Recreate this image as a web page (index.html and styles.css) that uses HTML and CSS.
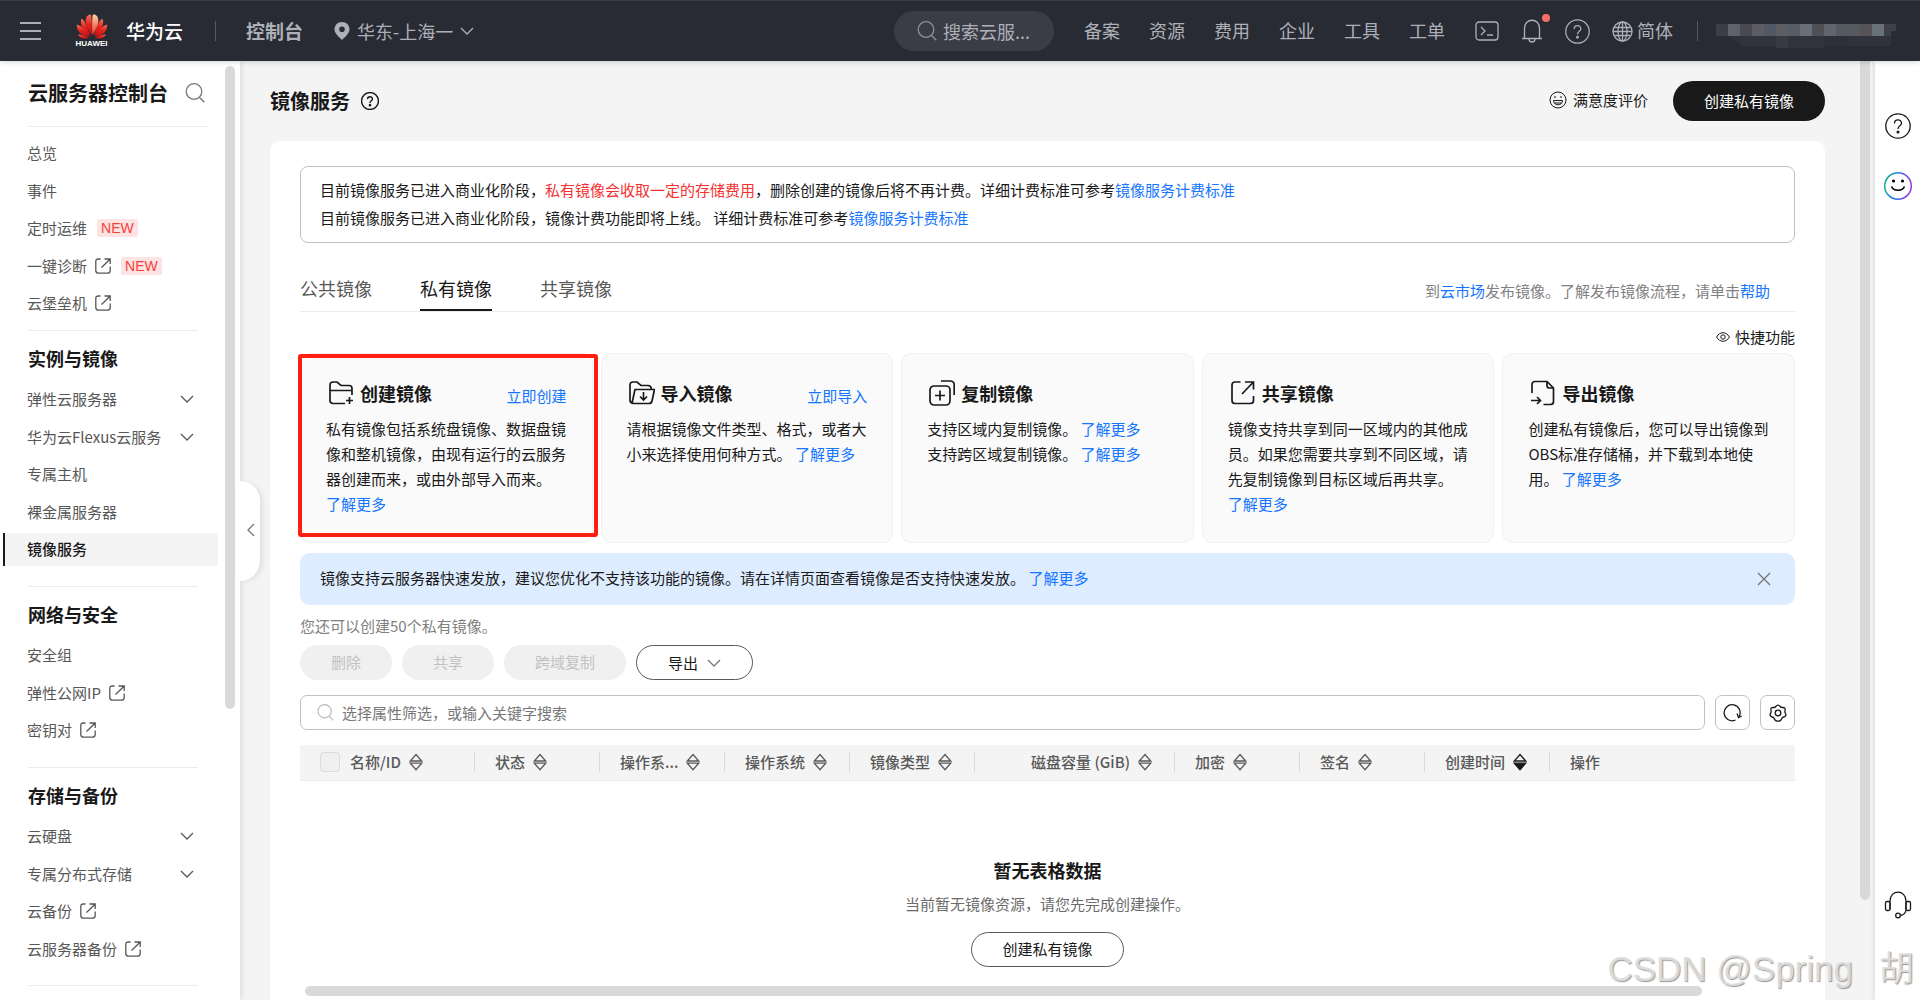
FILE: index.html
```html
<!DOCTYPE html>
<html lang="zh-CN">
<head>
<meta charset="utf-8">
<meta name="viewport" content="width=device-width, initial-scale=1">
<title>镜像服务 - 控制台</title>
<link rel="stylesheet" href="styles.css">
</head>
<body>
<svg class="sprite" aria-hidden="true">
  <defs>
    <symbol id="i-search" viewBox="0 0 20 20"><circle cx="9" cy="8.500" r="7.800"/><path d="M14.500 14.500L19.300 19.300"/></symbol>
    <symbol id="i-down" viewBox="0 0 14 14"><path d="M1 4l6 6 6-6"/></symbol>
    <symbol id="i-out" viewBox="0 0 16 16"><path d="M5.500 1H3.500Q.8 1 .8 3.500V12.500Q.8 15.200 3.500 15.200H12.500Q15.200 15.200 15.200 12.500V8.500M9.500 1H15.200V6M15 1.200L6.500 9.500"/></symbol>
    <symbol id="i-help" viewBox="0 0 26 26"><circle cx="13" cy="13" r="12.200"/><path d="M9.500 10.500C9.500 5.800 16.500 5.800 16.500 10.200C16.500 12.800 13 12.800 13 16"/><circle cx="13" cy="19" r=".9"/></symbol>
    <symbol id="i-sort" viewBox="0 0 14 18"><path d="M7 1.500L12.700 8H1.300Z"/><path d="M1.300 10.200H12.700L7 16.700Z"/></symbol>
  </defs>
</svg>

<header class="topbar">
  <button class="plain menu-btn" aria-label="菜单"><svg class="icon thick" width="22" height="20" viewBox="0 0 22 20"><path d="M0 2H21M0 10H21M0 18H21"/></svg></button>
  <a class="brand" href="#">
    <span class="brand-mark">
      <svg width="32" height="25" viewBox="0 0 32 25">
        <defs>
          <linearGradient id="petal" x1="0" y1="0" x2="0" y2="1"><stop offset="0" stop-color="#f2705a"/><stop offset=".5" stop-color="#e2231a"/><stop offset="1" stop-color="#c8101c"/></linearGradient>
          <linearGradient id="petal-light" x1="0" y1="0" x2="0" y2="1"><stop offset="0" stop-color="#fbd3a8"/><stop offset="1" stop-color="#e23a24"/></linearGradient>
        </defs>
        <g id="half" fill="url(#petal)">
          <path d="M15.500 21C10.500 13.500 8.500 7 10.500 3C12 .5 15 -.5 15.300 2C16 8 16 15 15.500 21Z"/>
          <path d="M14.300 22C7.500 18 3.500 11 5.300 5C8.500 4.500 11.500 13 14.300 22Z"/>
          <path d="M13.300 22.500C5 22 .5 17 .8 10.500C4.500 11 9.500 16 13.300 22.500Z"/>
          <path d="M12.800 23.300C8.500 25.500 4 25 2 20.500C5.500 20.500 9.500 22.500 12.800 23.300Z"/>
        </g>
        <use href="#half" transform="translate(32 0) scale(-1 1)"/>
        <path fill="url(#petal-light)" d="M16.500 21C21.500 13.500 23.500 7 21.500 3C20 .5 17 -.5 16.700 2C16 8 16 15 16.500 21Z"/>
      </svg>
      <span class="brand-small">HUAWEI</span>
    </span>
    <span class="brand-name">华为云</span>
  </a>
  <span class="bar-line first"></span>
  <a class="console" href="#">控制台</a>
  <button class="plain region">
    <svg width="16" height="18" viewBox="0 0 16 18"><path fill="#adb0b8" fill-rule="evenodd" d="M8 0C3.600 0 .5 3.200 .5 7.200C.5 11 4 14 8 18C12 14 15.500 11 15.500 7.200C15.500 3.200 12.400 0 8 0ZM8 4.500A2.800 2.800 0 1 1 8 10.100A2.800 2.800 0 1 1 8 4.500Z"/></svg>
    <span>华东-上海一</span>
    <svg class="icon" width="14" height="14"><use href="#i-down"/></svg>
  </button>
  <label class="top-search"><svg class="icon" width="20" height="20"><use href="#i-search"/></svg><input type="text" placeholder="搜索云服..." aria-label="搜索云服务"></label>
  <nav class="top-nav"><a href="#">备案</a><a href="#">资源</a><a href="#">费用</a><a href="#">企业</a><a href="#">工具</a><a href="#">工单</a></nav>
  <div class="top-tools">
    <button class="plain" aria-label="命令行"><svg class="icon" width="24" height="20" viewBox="0 0 24 20"><rect x="1" y="1" width="22" height="18" rx="3"/><path d="M6 6l4 4-4 4M12 14h6"/></svg></button>
    <button class="plain bell" aria-label="消息"><svg class="icon" width="22" height="24" viewBox="0 0 22 24"><path d="M1 19.500H21M3.500 19.500V9.500C3.500 -1.500 18.500 -1.500 18.500 9.500V19.500M8 20C8 24 14 24 14 20"/></svg></button>
    <button class="plain" aria-label="帮助"><svg class="icon" width="25" height="25"><use href="#i-help"/></svg></button>
    <button class="plain lang"><svg class="icon" width="21" height="21" viewBox="0 0 21 21"><circle cx="10.500" cy="10.500" r="9.500"/><ellipse cx="10.500" cy="10.500" rx="4.500" ry="9.500"/><path d="M10.500 1V20M2.500 6.500H18.500M2.500 14.500H18.500M1 10.500H20"/></svg><span>简体</span></button>
  </div>
  <span class="bar-line last"></span>
  <svg class="account" width="180" height="24" viewBox="0 0 180 24" aria-label="账号">
    <g><path fill="#3b3d47" d="M0 0h12v12H0z"/><path fill="#5f626b" d="M12 0h12v12H12z"/><path fill="#4b4a54" d="M24 0h12v12H24z"/><path fill="#5b5d63" d="M36 0h12v12H36z"/><path fill="#505866" d="M48 0h12v12H48z"/><path fill="#5c5e62" d="M60 0h12v12H60z"/><path fill="#575d66" d="M72 0h12v12H72z"/><path fill="#696f78" d="M84 0h12v12H84z"/><path fill="#4e5056" d="M96 0h12v12H96z"/><path fill="#60656f" d="M108 0h12v12H108z"/><path fill="#555960" d="M120 0h24v12H120z"/><path fill="#565258" d="M144 0h12v12H144z"/><path fill="#69717a" d="M156 0h12v12H156z"/><path fill="#3d4049" d="M168 0h12v7h-5v5h-7z"/></g>
    <g><path fill="#2d3038" d="M10 12h14v8z"/><path fill="#31343d" d="M24 12h36v10H24z"/><path fill="#373a43" d="M60 12h12v12H60z"/><path fill="#30333b" d="M72 12h36v12H72z"/><path fill="#2d3038" d="M108 12h24v11H108z"/><path fill="#30333c" d="M132 12h43v10H132z"/></g>
  </svg>
</header>

<div class="shell">
  <aside class="sidebar">
    <nav class="side-nav">
      <div class="side-title"><h2>云服务器控制台</h2><button class="plain" aria-label="搜索"><svg class="icon" width="20" height="20"><use href="#i-search"/></svg></button></div>
      <ul class="side-list lead">
        <li><a href="#">总览</a></li>
        <li><a href="#">事件</a></li>
        <li><a href="#">定时运维<span class="new">NEW</span></a></li>
        <li><a href="#">一键诊断<svg class="icon" width="16" height="16"><use href="#i-out"/></svg><span class="new">NEW</span></a></li>
        <li><a href="#">云堡垒机<svg class="icon" width="16" height="16"><use href="#i-out"/></svg></a></li>
      </ul>
      <h3>实例与镜像</h3>
      <ul class="side-list">
        <li><a href="#">弹性云服务器<svg class="icon fold" width="14" height="14"><use href="#i-down"/></svg></a></li>
        <li><a href="#">华为云Flexus云服务<svg class="icon fold" width="14" height="14"><use href="#i-down"/></svg></a></li>
        <li><a href="#">专属主机</a></li>
        <li><a href="#">裸金属服务器</a></li>
        <li><a class="active" href="#" aria-current="page">镜像服务</a></li>
      </ul>
      <h3>网络与安全</h3>
      <ul class="side-list">
        <li><a href="#">安全组</a></li>
        <li><a href="#">弹性公网IP<svg class="icon" width="16" height="16"><use href="#i-out"/></svg></a></li>
        <li><a href="#">密钥对<svg class="icon" width="16" height="16"><use href="#i-out"/></svg></a></li>
      </ul>
      <h3>存储与备份</h3>
      <ul class="side-list">
        <li><a href="#">云硬盘<svg class="icon fold" width="14" height="14"><use href="#i-down"/></svg></a></li>
        <li><a href="#">专属分布式存储<svg class="icon fold" width="14" height="14"><use href="#i-down"/></svg></a></li>
        <li><a href="#">云备份<svg class="icon" width="16" height="16"><use href="#i-out"/></svg></a></li>
        <li><a href="#">云服务器备份<svg class="icon" width="16" height="16"><use href="#i-out"/></svg></a></li>
      </ul>
      <hr>
    </nav>
    <div class="side-scroll"><span></span></div>
    <button class="collapse" aria-label="收起"><svg class="icon" width="9" height="14" viewBox="0 0 9 14"><path d="M8 1L2 7l6 6"/></svg></button>
  </aside>

  <main class="main">
    <div class="page-head">
      <h1>镜像服务</h1>
      <button class="plain" aria-label="帮助"><svg class="icon" width="18" height="18"><use class="bold" href="#i-help"/></svg></button>
      <button class="plain rate"><svg class="icon thin" width="18" height="18" viewBox="0 0 18 18"><circle cx="9" cy="9" r="8"/><path d="M4.500 9.500H13.500C13.500 15.200 4.500 15.200 4.500 9.500ZM5.300 12H12.700M6 5V7M12 5V7"/></svg>满意度评价</button>
      <button class="btn-dark">创建私有镜像</button>
    </div>

    <section class="panel">
      <div class="notice">
        <p>目前镜像服务已进入商业化阶段，<em>私有镜像会收取一定的存储费用</em>，删除创建的镜像后将不再计费。详细计费标准可参考<a href="#">镜像服务计费标准</a></p>
        <p>目前镜像服务已进入商业化阶段，镜像计费功能即将上线。 详细计费标准可参考<a href="#">镜像服务计费标准</a></p>
      </div>

      <div class="tabs">
        <button class="tab">公共镜像</button>
        <button class="tab on">私有镜像</button>
        <button class="tab">共享镜像</button>
        <p>到<a href="#">云市场</a>发布镜像。了解发布镜像流程，请单击<a href="#">帮助</a></p>
      </div>

      <div class="quick"><button class="plain"><svg class="icon thin" width="14" height="10" viewBox="0 0 14 10"><path d="M.6 5C3.500 -.7 10.500 -.7 13.400 5C10.500 10.700 3.500 10.700 .6 5Z"/><circle cx="7" cy="5" r="2.200"/></svg>快捷功能</button></div>

      <div class="cards">
        <article class="card marked">
          <header><svg class="icon card-icon" width="26" height="26" viewBox="0 0 26 26"><path d="M17 23.500H5Q2 23.500 2 20.500V5Q2 2 5 2H9L13 5.500H21Q24 5.500 24 8.500V15M2 10.500H24M21.500 17V24M18 20.500H25"/></svg><h4>创建镜像</h4><a href="#">立即创建</a></header>
          <p>私有镜像包括系统盘镜像、数据盘镜像和整机镜像，由现有运行的云服务器创建而来，或由外部导入而来。 <a href="#">了解更多</a></p>
        </article>
        <article class="card">
          <header><svg class="icon card-icon" width="26" height="26" viewBox="0 0 26 26"><path d="M4 23.500Q1 23 1 20V5Q1 2 4 2H8L12 5.500H19Q22 5.500 22.500 9M3.500 21L6 9.500H25.500L23 21Q22.500 23.500 20 23.500H5Q3 23.500 3.500 21M14.500 12V19.500M11 16.500L14.500 20L18 16.500"/></svg><h4>导入镜像</h4><a href="#">立即导入</a></header>
          <p>请根据镜像文件类型、格式，或者大小来选择使用何种方式。 <a href="#">了解更多</a></p>
        </article>
        <article class="card">
          <header><svg class="icon card-icon" width="26" height="26" viewBox="0 0 26 26"><rect x="1" y="6" width="20" height="19" rx="4"/><path d="M11 10.500V20.500M6 15.500H16M12 1H21Q25.200 1 25.200 5V15"/></svg><h4>复制镜像</h4></header>
          <p>支持区域内复制镜像。 <a href="#">了解更多</a><br>支持跨区域复制镜像。 <a href="#">了解更多</a></p>
        </article>
        <article class="card">
          <header><svg class="icon card-icon" width="26" height="26" viewBox="0 0 26 26"><path d="M10.500 2H5Q2 2 2 5V20.500Q2 23.500 5 23.500H20.500Q23.500 23.500 23.500 20.500V16M15 2H23.500V9.500M23 2.500L12 14"/></svg><h4>共享镜像</h4></header>
          <p>镜像支持共享到同一区域内的其他成员。如果您需要共享到不同区域，请先复制镜像到目标区域后再共享。 <a href="#">了解更多</a></p>
        </article>
        <article class="card">
          <header><svg class="icon card-icon" width="26" height="26" viewBox="0 0 26 26"><path d="M2 13V4.500Q2 1.500 5 1.500H17L23.500 8V21.500Q23.500 24.500 20.500 24.500H13.500M17 2V5.500Q17 8 19.500 8H23M1 20.500H10.500M7 17L10.500 20.500L7 24"/></svg><h4>导出镜像</h4></header>
          <p>创建私有镜像后，您可以导出镜像到OBS标准存储桶，并下载到本地使用。 <a href="#">了解更多</a></p>
        </article>
      </div>

      <div class="alert">
        <p>镜像支持云服务器快速发放，建议您优化不支持该功能的镜像。请在详情页面查看镜像是否支持快速发放。 <a href="#">了解更多</a></p>
        <button class="plain" aria-label="关闭"><svg class="icon" width="14" height="14" viewBox="0 0 14 14"><path d="M1 1L13 13M13 1L1 13"/></svg></button>
      </div>

      <p class="quota">您还可以创建50个私有镜像。</p>

      <div class="actions">
        <button class="pill" disabled>删除</button>
        <button class="pill" disabled>共享</button>
        <button class="pill" disabled>跨域复制</button>
        <button class="pill line drop">导出<svg class="icon" width="14" height="14"><use href="#i-down"/></svg></button>
      </div>

      <div class="filter">
        <label class="filter-box"><svg class="icon" width="17" height="17"><use href="#i-search"/></svg><input type="text" placeholder="选择属性筛选，或输入关键字搜索" aria-label="筛选"></label>
        <button class="square" aria-label="刷新"><svg class="icon" width="19" height="18" viewBox="0 0 19 18"><path d="M12.500 16A8 8 0 1 1 16.200 12.500M14 9.500L15.500 13.500L18.800 12"/></svg></button>
        <button class="square" aria-label="设置"><svg class="icon" width="18" height="18" viewBox="0 0 18 18"><path d="M6.800 2.500Q9 -.3 11.200 2.500Q12 3.600 13.500 3.500Q16.800 3.300 16 6.500Q15.500 8 16.300 9Q18 11.500 15 13Q13.500 13.200 12.800 14.300Q12 17.300 9 17.200Q6 17.300 5.200 14.300Q4.500 13.200 3 13Q0 11.500 1.700 9Q2.500 8 2 6.500Q1.200 3.300 4.500 3.500Q6 3.600 6.800 2.500Z"/><circle cx="9" cy="9" r="2.800"/></svg></button>
      </div>

      <table class="grid">
        <colgroup><col class="c-name"><col class="c-std" span="4"><col class="c-disk"><col class="c-std" span="3"><col></colgroup>
        <thead><tr>
          <th><div><input type="checkbox" aria-label="全选" disabled>名称/ID<svg class="icon" width="14" height="18"><use href="#i-sort"/></svg></div></th>
          <th><div>状态<svg class="icon" width="14" height="18"><use href="#i-sort"/></svg></div></th>
          <th><div>操作系...<svg class="icon" width="14" height="18"><use href="#i-sort"/></svg></div></th>
          <th><div>操作系统<svg class="icon" width="14" height="18"><use href="#i-sort"/></svg></div></th>
          <th><div>镜像类型<svg class="icon" width="14" height="18"><use href="#i-sort"/></svg></div></th>
          <th><div class="right">磁盘容量 (GiB)<svg class="icon" width="14" height="18"><use href="#i-sort"/></svg></div></th>
          <th><div>加密<svg class="icon" width="14" height="18"><use href="#i-sort"/></svg></div></th>
          <th><div>签名<svg class="icon" width="14" height="18"><use href="#i-sort"/></svg></div></th>
          <th aria-sort="descending"><div>创建时间<svg class="icon sorted" width="14" height="18" viewBox="0 0 14 18"><path d="M7 1.500L12.700 8H1.300Z"/><path fill="#191919" d="M1.300 10.200H12.700L7 16.700Z"/></svg></div></th>
          <th><div>操作</div></th>
        </tr></thead>
      </table>

      <div class="empty">
        <h5>暂无表格数据</h5>
        <p>当前暂无镜像资源，请您先完成创建操作。</p>
        <button class="pill line">创建私有镜像</button>
      </div>
      <div class="h-scroll"></div>
    </section>
  </main>

  <div class="v-scroll"><span></span></div>

  <aside class="rail">
    <button class="plain" aria-label="帮助"><svg class="icon" width="26" height="26"><use href="#i-help"/></svg></button>
    <button class="plain" aria-label="智能助手"><svg width="28" height="30" viewBox="0 0 28 30"><defs><linearGradient id="ring" x1="0" y1=".3" x2="1" y2=".5"><stop offset="0" stop-color="#12b08c"/><stop offset=".45" stop-color="#1f7cf0"/><stop offset="1" stop-color="#a035d8"/></linearGradient></defs><circle cx="14" cy="15" r="13.300" fill="none" stroke="url(#ring)" stroke-width="1.500"/><circle cx="9.500" cy="10" r="1.600"/><circle cx="18.500" cy="10" r="1.600"/><path d="M7.500 15.500C9.500 20.500 18.500 20.500 20.500 15.500" fill="none" stroke="#000" stroke-width="1.600"/></svg></button>
    <button class="plain support" aria-label="客服"><svg class="icon" width="28" height="28" viewBox="0 0 28 28"><path d="M6 18.500V10C6 -1.800 22 -1.800 22 10V19Q21.500 23.500 16.500 24.500"/><rect x="1.500" y="10.500" width="4.500" height="9" rx="1.500"/><rect x="22" y="10.500" width="4.500" height="9" rx="1.500"/><circle cx="14" cy="24.500" r="2.300"/></svg></button>
  </aside>
</div>
<div class="watermark"><span>CSDN @Spring</span><span>胡</span></div>
</body>
</html>
```
FILE: styles.css
```css
* { box-sizing: border-box; margin: 0; padding: 0; }
body {
  display: grid;
  grid-template-rows: 61px minmax(0, 1fr);
  height: 100vh;
  overflow: hidden;
  font: 15px/22px "Noto Sans CJK SC", "Noto Sans", sans-serif;
  color: #191919;
  background: #f4f4f4;
}
button, input { font: inherit; color: inherit; }
button { cursor: pointer; }
a { color: #1476ff; text-decoration: none; }
ul { list-style: none; }
.sprite { position: absolute; width: 0; height: 0; }
.icon { flex: none; fill: none; stroke: currentColor; stroke-width: 1.3; }
.icon.thick { stroke-width: 2; }
.icon.thin { stroke-width: 1; }
.plain { display: flex; align-items: center; border: 0; background: none; }

/* top bar */
.topbar {
  display: flex;
  align-items: center;
  padding: 0 24px 0 20px;
  border-top: 1px solid #3c3c3c;
  background: #282b33;
  color: #adb0b8;
  font-size: 18px;
  z-index: 3;
  box-shadow: 0 1px 5px rgba(0, 0, 0, .18);
  white-space: nowrap;
}
.topbar a { color: inherit; }
.brand { display: flex; align-items: center; gap: 18px; margin-left: 33px; }
.brand-mark { display: flex; flex-direction: column; align-items: center; width: 33px; }
.brand-small { font: bold 8px/10px "Liberation Sans", sans-serif; color: #fff; }
.topbar .brand-name { font-size: 19px; font-weight: 500; color: #fff; }
.bar-line { width: 1px; height: 20px; background: #575a63; }
.bar-line.first { margin: 0 30px 0 32px; }
.bar-line.last { margin: 0 18px 0 24px; }
.console { font-size: 19px; font-weight: bold; }
.region { margin-left: 31px; gap: 7px; }
.top-search {
  display: flex;
  align-items: center;
  gap: 6px;
  width: 160px;
  height: 40px;
  margin-left: auto;
  padding: 0 20px 0 23px;
  border-radius: 20px;
  background: #3a3d45;
}
.top-search input { width: 100%; min-width: 0; border: 0; outline: 0; background: none; }
.top-search .icon { color: #8d9097; }
::placeholder { color: inherit; opacity: 1; }
.top-nav { display: flex; gap: 29px; margin-left: 30px; padding-bottom: 2px; }
.top-tools { display: flex; align-items: center; gap: 22px; margin-left: 30px; }
.bell { position: relative; }
.bell::after { content: ""; position: absolute; top: -5px; right: -7px; width: 8px; height: 8px; border-radius: 50%; background: #f66f6a; }
.lang { gap: 4px; }
.lang span { padding-bottom: 2px; }
.account { flex: none; margin-top: 10px; }

.shell { display: grid; grid-template-columns: 240px minmax(0, 1fr) 15px 45px; min-height: 0; }

/* side bar */
.sidebar { position: relative; display: flex; min-height: 0; background: #fff; box-shadow: 1px 0 6px rgba(0, 0, 0, .12); z-index: 2; }
.side-nav { flex: 1; overflow: hidden; padding: 0 7px 0 3px; }
.side-title { display: flex; align-items: center; justify-content: space-between; height: 66px; margin: 0 10px 7px 25px; padding: 0 3px 2px 0; border-bottom: 1px solid #ebebeb; }
.side-title h2 { font-size: 20px; white-space: nowrap; }
.side-title .icon { color: #777; }
.side-list { display: grid; grid-auto-rows: 38px 37px; margin-bottom: 18px; }
.side-list.lead { margin-bottom: 8px; }
.side-list li { display: flex; align-items: center; }
.side-list a { display: flex; align-items: center; flex: 1; height: 33px; padding: 0 24px 0 22px; border-left: 2px solid transparent; color: #575757; white-space: nowrap; }
.side-list .icon { margin-left: 8px; }
.side-list .fold { margin-left: auto; }
.side-list a.active { border-color: #191919; background: #f4f4f4; color: #191919; font-weight: 500; }
.new { margin-left: 10px; padding: 0 4px; border-radius: 2px; background: #fde3e1; color: #f53f3f; font: 14px/18px "Liberation Sans", sans-serif; }
.side-nav h3 { height: 50px; margin: 0 20px 0 25px; padding-top: 15px; border-top: 1px solid #ebebeb; font-size: 18px; line-height: 24px; }
.side-nav hr { margin: 0 20px 0 25px; border: 0; border-top: 1px solid #ebebeb; }
.side-scroll { display: flex; flex-direction: column; width: 15px; padding: 5px 5px 0 0; }
.side-scroll::after { content: ""; flex: 291; }
.side-scroll span { flex: 643; border-radius: 5px; background: #d9d9d9; }
.collapse { position: absolute; left: 100%; top: 50%; width: 20px; height: 100px; margin-top: -50px; border: 0; border-radius: 0 20px 20px 0; background: #fff; color: #777; box-shadow: 3px 1px 4px rgba(0, 0, 0, .08); }

/* content */
.main { display: flex; flex-direction: column; min-height: 0; overflow: hidden; padding: 0 35px 0 30px; }
.page-head { display: flex; align-items: center; flex: none; height: 80px; }
.page-head h1 { margin-right: 11px; font-size: 20px; line-height: 28px; }
.bold { stroke-width: 2; }
.rate { gap: 6px; margin-left: auto; padding-bottom: 2px; }
.btn-dark { height: 40px; margin-left: 25px; padding: 0 31px 1px; border: 0; border-radius: 20px; background: #191919; color: #fff; }
.panel { flex: 1 0 auto; padding: 25px 30px 5px; border-radius: 10px 10px 0 0; background: #fff; }
.notice { padding: 9px 19px 10px; border: 1px solid #c2c2c2; border-radius: 8px; line-height: 28px; }
.notice em { color: #f5302f; font-style: normal; }
.tabs { display: flex; gap: 48px; height: 45px; margin-top: 24px; border-bottom: 1px solid #ebebeb; }
.tab { border: 0; border-bottom: 2px solid transparent; background: none; color: #595959; font-size: 18px; }
.tab.on { border-color: #191919; color: #191919; }
.tabs p { margin: 13px 25px 0 auto; color: #808080; }
.quick { display: flex; justify-content: flex-end; padding: 14px 0 5px; }
.quick button { gap: 5px; }
.cards { display: grid; grid-template-columns: repeat(5, minmax(0, 1fr)); gap: 8px; }
.card { position: relative; min-height: 190px; padding: 25px 25px 26px; border: 1px solid #f0f0f0; border-radius: 10px; background: #fafafa; line-height: 25px; }
.card header { display: flex; align-items: center; height: 28px; margin-bottom: 9px; }
.card h4 { margin-left: 6px; font-size: 18px; }
.card header a { margin: 4px 0 0 auto; }
.card p a { white-space: nowrap; }
.card-icon { margin-left: 2px; stroke-width: 1.7; }
.marked::after { content: ""; position: absolute; inset: 0 -6px 5px -3px; border: 4px solid #ff1e10; border-radius: 3px; pointer-events: none; }
.alert { display: flex; align-items: center; justify-content: space-between; height: 52px; margin-top: 10px; padding: 0 24px 0 20px; border-radius: 10px; background: #deecff; }
.alert p { padding-bottom: 2px; }
.alert button { color: #777; }
.quota { margin: 10px 0 8px; color: #808080; }
.actions { display: flex; gap: 10px; }
.pill { display: flex; align-items: center; gap: 9px; height: 35px; padding: 0 31px 2px; border: 0; border-radius: 18px; background: #f0f0f0; color: #c2c2c2; }
.pill.line { padding: 0 30px 1px; border: 1px solid #595959; background: #fff; color: #191919; }
.pill.drop { padding: 0 31px; }
.pill .icon { color: #777; }
.filter { display: flex; gap: 10px; margin: 15px 0; }
.filter-box { display: flex; align-items: center; flex: 1; gap: 8px; height: 35px; padding: 0 16px; border: 1px solid #c2c2c2; border-radius: 7px; color: #777; }
.filter-box .icon { color: #b8b8b8; }
.filter-box input { flex: 1; border: 0; outline: 0; background: none; }
.square { display: grid; place-items: center; width: 35px; height: 35px; border: 1px solid #c2c2c2; border-radius: 7px; background: #fff; }
.grid { width: 100%; table-layout: fixed; border-collapse: collapse; }
.grid tr { height: 35px; border-bottom: 1px solid #ebebeb; background: #f4f4f4; }
.grid .c-name { width: 175px; }
.grid .c-std { width: 125px; }
.grid .c-disk { width: 200px; }
.grid th { color: #595959; font-weight: 500; }
.grid th div { display: flex; align-items: center; gap: 8px; height: 20px; padding-left: 20px; border-right: 1px solid #dbdbdb; white-space: nowrap; }
.grid th:last-child div { border: 0; }
.grid th .right { justify-content: flex-end; padding-right: 22px; }
.grid .sorted { color: #191919; }
.grid input { appearance: none; width: 20px; height: 20px; margin-right: 2px; border: 1px solid #dbdbdb; border-radius: 4px; background: #f0f0f0; }
.empty { display: flex; flex-direction: column; align-items: center; padding-top: 76px; }
.empty h5 { font-size: 18px; line-height: 26px; }
.empty p { margin: 10px 0 17px; color: #6b6b6b; }
.h-scroll { height: 10px; margin: 19px 93px 0 5px; border-radius: 5px; background: #d9d9d9; }

.v-scroll { display: flex; flex-direction: column; padding-right: 5px; }
.v-scroll span { flex: 839; border-radius: 0 0 5px 5px; background: #d9d9d9; }
.v-scroll::after { content: ""; flex: 100; }
.rail { display: flex; flex-direction: column; align-items: center; gap: 32px; padding: 52px 0 81px; background: #fff; box-shadow: 0 0 6px rgba(0, 0, 0, .14); }
.support { margin-top: auto; }
.watermark { position: absolute; right: 6px; bottom: 6px; z-index: 4; display: flex; gap: 26px; font: 35px/50px "Liberation Sans", "Noto Sans CJK SC", sans-serif; color: rgba(225, 225, 225, .9); text-shadow: 1px 1px 1px rgba(110, 110, 110, .7); pointer-events: none; white-space: nowrap; }
```
